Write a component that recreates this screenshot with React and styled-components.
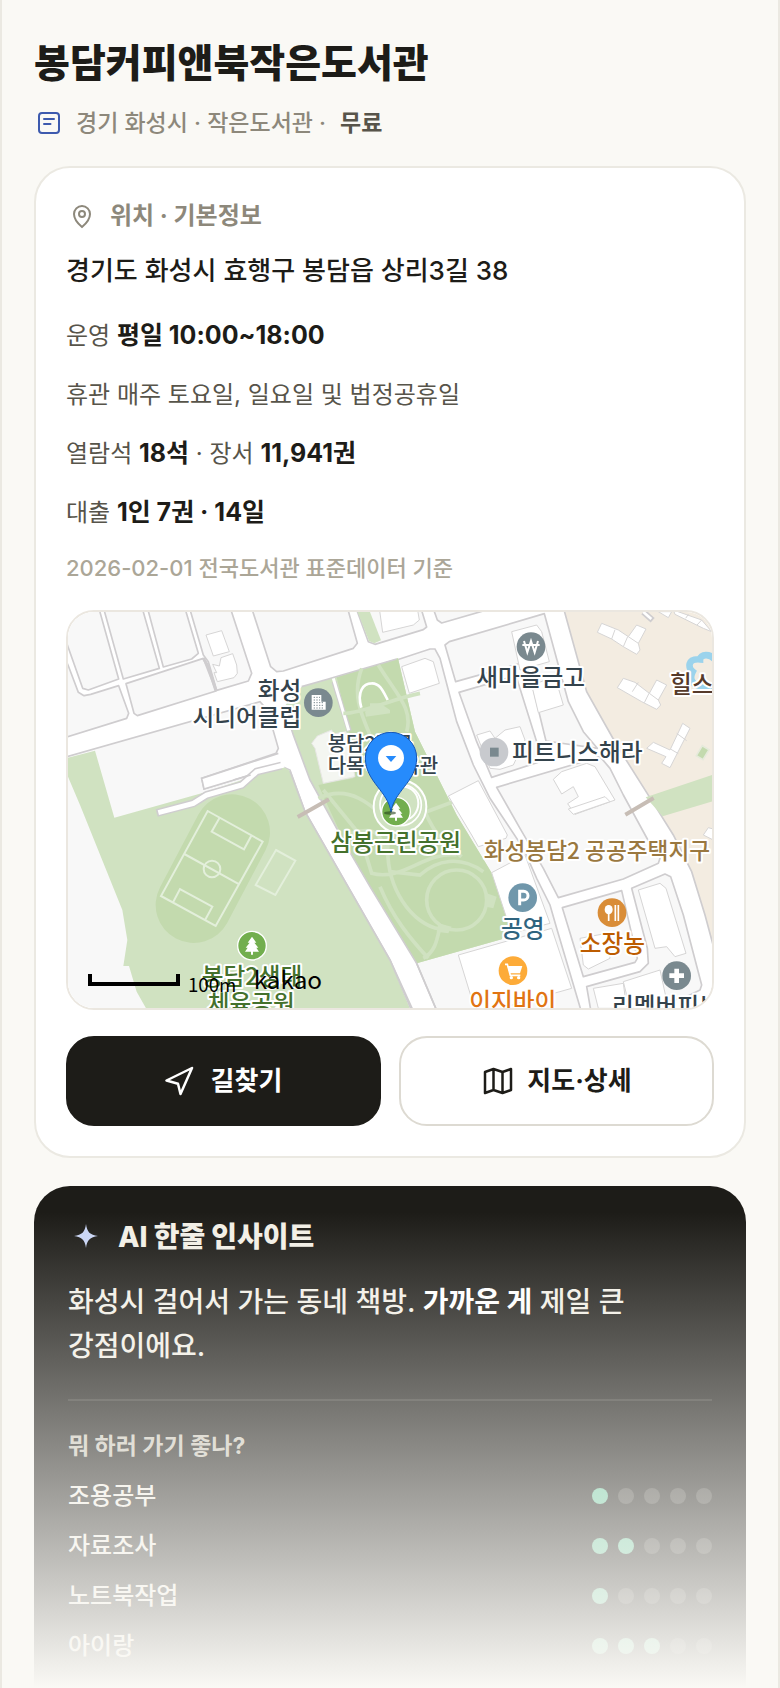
import React from "react";
import styled, { createGlobalStyle } from "styled-components";

const GlobalStyle = createGlobalStyle`
  * {
    box-sizing: border-box;
  }

  body {
    margin: 0;
    background: #faf9f5;
    color: #1d1c18;
    font-family: Inter, "Noto Sans CJK KR", sans-serif;
    font-weight: 500;
  }
`;

const Page = styled.main`
  position: relative;
  min-height: 100vh;
  padding: 38px 32px 0;
  border: solid #ebe9e2;
  border-width: 0 2px;
  overflow: hidden;
`;

const Title = styled.h1`
  margin: 0;
  font-size: 39px;
  font-weight: 800;
  line-height: 50px;
`;

const Subtitle = styled.p`
  display: flex;
  align-items: center;
  margin: 20px 0 28px;
  font-size: 23px;
  line-height: 30px;
  color: #8d887b;

  svg {
    width: 30px;
    height: 30px;
    margin-right: 12px;
  }

  strong {
    margin-left: 14px;
    font-weight: 700;
    color: #57544a;
  }
`;

const InfoCard = styled.section`
  padding: 31px 30px 30px;
  border: 2px solid #ebe9e2;
  border-radius: 36px;
  background: #fff;
`;

const CardTitle = styled.h2`
  display: flex;
  align-items: center;
  gap: 12px;
  margin: 0 0 18px;
  font-size: 24px;
  font-weight: 700;
  line-height: 34px;
  color: #8d887b;

  svg {
    width: 32px;
    height: 32px;
  }
`;

const Address = styled.p`
  margin: 0 0 27px;
  font-size: 26px;
  line-height: 40px;
`;

const Facts = styled.dl`
  display: flex;
  flex-direction: column;
  gap: 23px;
  margin: 0 0 22px;
`;

const Fact = styled.div`
  font-size: 24px;
  font-weight: 400;
  line-height: 36px;
  color: #57544a;

  dt,
  dd {
    display: inline;
    margin: 0;
  }

  strong {
    font-size: 25px;
    font-weight: 700;
    line-height: 1;
    color: #1d1c18;
  }
`;

const Source = styled.p`
  margin: 0 0 27px;
  font-size: 22px;
  line-height: 30px;
  color: #aba697;
`;

const MapFrame = styled.div`
  border: 2px solid #ebe7e0;
  border-radius: 28px;
  overflow: hidden;

  svg {
    display: block;
    width: 100%;
    height: auto;
  }
`;

const MapLabel = styled.text`
  font-family: "Noto Sans CJK KR", sans-serif;
  font-size: ${(props) => props.$size || 71}px;
  font-weight: 500;
  fill: ${(props) => props.$color || "#34434c"};
  stroke: #fff;
  stroke-width: 12px;
  stroke-linejoin: round;
  paint-order: stroke;
`;

const MapNote = styled.text`
  font-family: "Noto Sans CJK KR", sans-serif;
  font-size: ${(props) => props.$size}px;
  font-weight: 400;
  fill: #000;
`;

const Actions = styled.div`
  display: grid;
  grid-template-columns: 1fr 1fr;
  gap: 18px;
  margin-top: 26px;
`;

const ActionLink = styled.a`
  display: flex;
  align-items: center;
  justify-content: center;
  gap: 14px;
  height: 90px;
  border: 2px solid ${(props) => (props.$dark ? "#1d1c18" : "#dddad2")};
  border-radius: 28px;
  background: ${(props) => (props.$dark ? "#1d1c18" : "#fff")};
  color: ${(props) => (props.$dark ? "#fff" : "#1d1c18")};
  font-size: 26px;
  font-weight: 700;
  line-height: 34px;
  text-decoration: none;

  svg {
    width: 32px;
    height: 32px;
  }
`;

const InsightCard = styled.section`
  margin-top: 28px;
  padding: 34px 34px 25px;
  border-radius: 36px 36px 0 0;
  background: #1d1c18;
  color: #f2efe6;
`;

const InsightTitle = styled.h2`
  display: flex;
  align-items: center;
  gap: 14px;
  margin: 0 0 26px;
  font-size: 28px;
  font-weight: 800;
  line-height: 34px;

  svg {
    width: 36px;
    height: 32px;
  }
`;

const InsightText = styled.p`
  margin: 0 0 31px;
  font-size: 28px;
  line-height: 44px;
  word-break: keep-all;

  strong {
    font-weight: 700;
    color: #fff;
  }
`;

const Divider = styled.hr`
  height: 2px;
  margin: 0 0 28px;
  border: 0;
  background: #35342f;
`;

const ScoreTitle = styled.h3`
  margin: 0 0 16px;
  font-size: 23px;
  font-weight: 700;
  line-height: 34px;
  color: #c9c5b9;
`;

const ScoreList = styled.ul`
  display: flex;
  flex-direction: column;
  gap: 16px;
  margin: 0;
  padding: 0;
  list-style: none;
`;

const ScoreRow = styled.li`
  display: flex;
  align-items: center;
  justify-content: space-between;
  font-size: 24px;
  line-height: 34px;
`;

const Dots = styled.div`
  display: flex;
  gap: 10px;
`;

const Dot = styled.span`
  width: 16px;
  height: 16px;
  border-radius: 50%;
  background: ${(props) => (props.$on ? "#6fc9a2" : "#45443f")};
`;

const Fade = styled.div`
  position: absolute;
  right: 0;
  bottom: 0;
  left: 0;
  height: 476px;
  background: linear-gradient(rgba(250, 249, 245, 0), #faf9f5);
  pointer-events: none;
`;

const scores = [
  { name: "조용공부", value: 1 },
  { name: "자료조사", value: 2 },
  { name: "노트북작업", value: 1 },
  { name: "아이랑", value: 3 },
];

const blocks = [
  "0,0 114,0 176,222 85,255 68,250 24,125 0,60",
  "128,0 190,222 298,190 244,0",
  "260,0 310,186 395,162 415,145 372,0",
  "0,130 24,180 55,262 72,272 92,268 176,242 206,325 200,340 0,402",
  "198,236 430,160 468,258 232,332 222,325",
  "386,0 430,150 445,170 470,256 565,228 575,205 508,0",
  "572,0 632,185 650,200 670,198 880,130 892,115 860,0",
  "885,0 925,110 945,118 1090,74 1100,66 1080,0",
  "1116,0 1132,45 1145,54 1290,12 1290,0",
  "1155,120 1168,110 1453,26 1525,290 1570,380 1612,430 1458,408 1400,170 1187,230",
  "1197,262 1368,212 1430,410 1440,470 1295,517 1250,410",
  "1310,547 1620,455 1650,490 1690,570 1780,735 1800,760 1795,775 1690,822 1495,878 1450,790 1380,670",
  "1507,908 1685,857 1732,1060 1725,1072 1570,1115",
  "1715,850 1815,807 1832,815 1870,930 1925,1140 1920,1155 1885,1172 1600,1260 1580,1145 1740,1100 1765,1075 1762,1030",
];

const buildings = [
  "438,90 485,77 508,140 460,153",
  "458,178 478,183 483,158 518,146 530,180 532,205 522,218 472,230 462,203 470,203",
  "958,10 968,82 1060,60 1078,45 1072,10",
  "1025,185 1095,160 1120,170 1138,235 1048,265",
  "1355,80 1430,60 1445,80 1468,170 1380,195",
  "1415,240 1485,215 1510,300 1435,323",
  "1250,390 1290,378 1305,400 1335,375 1380,365 1395,405 1360,480 1320,493 1290,490",
  "1480,523 1505,500 1580,475 1605,485 1665,585 1545,628 1523,596 1555,575 1540,545 1505,567",
  "1165,573 1255,527 1342,690 1338,700 1255,725 1235,690",
  "1295,803 1395,750 1470,955 1355,985",
  "1195,1050 1475,970 1535,1150 1250,1230",
  "1525,612 1635,575 1650,590 1540,628",
  "1735,855 1800,835 1818,850 1878,1045 1845,1055 1820,1025 1785,1030",
  "1560,1000 1640,985 1650,1060 1585,1092 1570,1080",
  "1600,1150 1690,1135 1700,1210 1615,1210",
  "1690,1130 1800,1095 1825,1210 1710,1210",
];

const houses = [
  "1625,55 1675,75 1705,95 1730,60 1758,72 1735,115 1740,135 1730,148 1690,125 1655,102 1612,82",
  "1690,220 1725,232 1768,265 1790,225 1820,240 1795,285 1802,300 1790,313 1745,290 1672,248",
  "1868,355 1890,370 1830,488 1805,475 1818,455 1760,430 1780,412 1830,435",
  "1840,15 1925,45 1955,80 1930,70 1845,28",
  "1795,20 1835,20 1825,38",
  "1945,668 1960,672 1960,705 1930,690",
];

const FieldIcon = () => (
  <svg viewBox="0 0 30 30" fill="none" stroke="#3d5aae" strokeWidth="2" strokeLinecap="round" aria-hidden="true">
    <rect x="5" y="5" width="20" height="20" rx="3" />
    <path d="M10 11h10M10 16h6.500" />
  </svg>
);

const PinIcon = () => (
  <svg viewBox="0 0 32 32" fill="none" stroke="currentColor" strokeWidth="2" aria-hidden="true">
    <path d="M16 27c-3.400-2.800-8-7.600-8-13a8 8 0 0 1 16 0c0 5.400-4.600 10.200-8 13z" />
    <circle cx="16" cy="14" r="3" />
  </svg>
);

const NavigationIcon = () => (
  <svg viewBox="0 0 32 32" fill="none" stroke="currentColor" strokeWidth="2.500" strokeLinejoin="round" aria-hidden="true">
    <path d="M27 3 1.500 15.500l11.500 3.200L15.500 29z" />
  </svg>
);

const MapIcon = () => (
  <svg viewBox="0 0 32 32" fill="none" stroke="currentColor" strokeWidth="2.500" strokeLinejoin="round" aria-hidden="true">
    <path d="m4 7 8.500-3 9 3L30 4v21l-8.500 3-9-3L4 28zM12.500 4v21M21.500 7v21" />
  </svg>
);

const SparkIcon = () => (
  <svg viewBox="0 0 36 32" fill="#c9d5f5" aria-hidden="true">
    <path d="M18 3c1 8 4 11 12 12-8 1-11 4-12 12-1-8-4-11-12-12 8-1 11-4 12-12z" />
  </svg>
);

const TreeMark = ({ x, y }) => (
  <g transform={`translate(${x} ${y})`}>
    <circle r="43" fill="#72ae4e" stroke="#fff" strokeWidth="4" />
    <path d="M0-27-13-9h6l-12 15h6l-8 12H-3V27H3V18H21L13 6h6L7-9h6z" fill="#fff" />
  </g>
);

const LibraryMap = () => (
  <svg viewBox="24 21 1932 1188" role="img" aria-label="지도">
    <rect width="1980" height="1240" fill="#fff" />

    {/* ground to the west and the sports park */}
    <path d="M0 461 600 290 622 315 655 430 648 445 425 520 432 552 660 482 690 495 735 620 990 1065 1070 1240H0z" fill="#f8f8f8" stroke="#cfcdcf" strokeWidth="5" />
    <path d="M24 458 105 437 163 638 430 563 670 485 690 498 735 620 990 1065 1062 1240H275L230 1160 207 1083H190L202 1005 187 915 60 600 24 515z" fill="#d0e2c1" />
    <path d="M516 682 401 900" stroke="#c3daae" strokeWidth="228" strokeLinecap="round" />
    <g fill="none" stroke="#e3efdb" strokeWidth="6">
      <path d="M443 618 608 710 467 963 303 873zM373 747l165 91M478 640l-23 40 97 53 22-41M340 890l20-38 97 53-23 42M648 735l58 32-60 103-59-30z" />
      <circle cx="456" cy="792" r="25" />
    </g>
    <path d="M290 624 400 595 440 570 545 540 590 500 664 482" fill="none" stroke="#cfcdcf" strokeWidth="24" />
    <path d="M295 623 400 595 440 570 545 540 590 500 672 480" fill="none" stroke="#fff" strokeWidth="15" />
    <path d="M425 520 520 492V524L432 552z" fill="#fff" />
    <path d="M655 445 425 520 432 552 572 510" fill="none" stroke="#cfcdcf" strokeWidth="5" />
    <path d="M690 498 735 620 990 1065 1065 1240" fill="none" stroke="#cfcdcf" strokeWidth="5" />

    {/* central park with its eastern strip */}
    <path d="M1010 165 1110 132 1125 132 1140 160 1190 350 1240 480 1290 580 1390 730 1430 820 1470 900 1490 970 1570 1240H1140L1070 1075z" fill="#f8f8f8" stroke="#cfcdcf" strokeWidth="5" />
    <path d="M725 245 805 222 830 216 1014 160 1065 380 1190 630 1335 870 1360 930 1325 1003 1070 1075 930 845 860 725 750 525 700 390 672 305z" fill="#d0e2c1" />
    <path d="M830 216 1014 160 1065 380 1190 630 1335 870 1360 930 1325 1003 1070 1075 930 845 860 725 775 540 880 520 868 380z" fill="#c3daae" />
    <path d="M725 245 805 222 825 216 1010 162M672 305 700 390 750 525 860 725 930 845 1070 1075 1140 1240" fill="none" stroke="#cfcdcf" strokeWidth="5" />
    <path d="M822 230 868 378" stroke="#cfcdcf" strokeWidth="15" />
    <path d="M820 220 866 376" stroke="#fff" strokeWidth="9" />
    <path d="M755 415 772 393 815 375 820 387 858 380 885 515 790 535 765 430z" fill="#f4f6f1" stroke="#e7e6e4" strokeWidth="3" />
    <g fill="none" stroke="#d0e2c1" strokeWidth="11">
      <path d="M905 190C875 270 905 330 930 390M850 325C910 325 1000 280 1080 265M955 180C1010 270 1060 310 1040 380M790 555 900 690 935 805C1030 830 1090 740 1190 750M775 580C860 540 930 580 1030 700L1100 620 1180 590M985 700C970 850 1060 960 1140 972M1095 620C1130 700 1160 720 1205 755M860 690C920 670 960 660 980 750M960 845C1000 940 1050 1000 1105 1060M1140 965C1130 1010 1125 1040 1090 1060M990 800 1080 810C1130 765 1200 750 1270 800" />
      <circle cx="1190" cy="885" r="90" />
    </g>
    <path d="M915 320 930 310V295H960L990 315V325L918 335zM1280 865 1310 875 1300 910 1278 905zM1135 955 1175 965 1165 985 1130 980z" fill="#d0e2c1" />
    <ellipse cx="1020" cy="605" rx="79" ry="80" fill="#d0e2c1" stroke="#fff" strokeWidth="6" />
    <ellipse cx="1030" cy="595" rx="45" ry="50" fill="none" stroke="#fff" strokeWidth="6" />
    <ellipse cx="1022" cy="600" rx="62" ry="62" fill="none" stroke="#fff" strokeWidth="5" />
    <path d="M904 308C890 260 910 235 935 235 960 234 970 260 983 285" fill="none" stroke="#fff" strokeWidth="8" />

    {/* apartment district */}
    <path d="M1508 0 1580 260 1670 420 1790 610 1840 690 1895 800 1935 930 1970 1060V0z" fill="#f3ece1" stroke="#cfcdcf" strokeWidth="5" />
    <path d="M1757 577 1980 502V582L1808 634z" fill="#d0e2c1" />
    <path d="m1927 422 20 12-18 30-20-12z" fill="#c3daae" stroke="#e5eadb" strokeWidth="5" />
    <path d="M1970 170C1950 140 1920 150 1920 163 1880 160 1885 190 1898 200 1885 225 1900 240 1925 245 1950 250 1960 240 1970 240" fill="none" stroke="#9bd3ec" strokeWidth="20" />
    <path d="m1750 21 28 25" stroke="#cfcdcf" strokeWidth="18" />
    <path d="m1750 21 24 21" stroke="#fff" strokeWidth="8" />

    <g fill="#f8f8f8" stroke="#cfcdcf" strokeWidth="5" strokeLinejoin="round">
      {blocks.map((points) => (
        <polygon key={points} points={points} />
      ))}
    </g>
    <path d="M893 21H930L963 106 943 115 927 108z" fill="#d0e2c1" />
    <path d="M430 160 445 185 468 258" fill="none" stroke="#cfcdcf" strokeWidth="9" />
    <g fill="#fff" stroke="#d6d5d5" strokeWidth="3">
      {buildings.map((points) => (
        <polygon key={points} points={points} />
      ))}
      {houses.map((points) => (
        <polygon key={points} points={points} />
      ))}
      <path d="m1665 74-10 28M1703 95l-13 30M1705 95l30 20M1735 232l-18 28M1767 265l-14 28M1768 265l27 20M1850 385l30 22M1833 433l22 13M1885 28l-8 12M1925 45l-14 15" />
    </g>
    <path d="M713 636 807 583M1696 629 1781 579" stroke="#c7bdb5" strokeWidth="12" />

    {/* places */}
    <circle cx="775" cy="293" r="43" fill="#7a898f" />
    <path d="M755 270h29v20h13v24h-42z" fill="#fff" />
    <path d="M761 277h19M761 285h19M761 293h32M761 301h32M761 309h32" stroke="#7a898f" strokeWidth="3" strokeDasharray="4 4" />
    <circle cx="1413" cy="125" r="43" fill="#7a898f" />
    <path d="m1392 108 10 34 11-34 11 34 10-34M1387 120h52" fill="none" stroke="#fff" strokeWidth="6" />
    <circle cx="1302" cy="441" r="43" fill="#c8cace" />
    <rect x="1290" y="428" width="26" height="27" fill="#7a898f" />
    <MapLabel x="724" y="283" textAnchor="end">화성</MapLabel>
    <MapLabel x="724" y="362" textAnchor="end">시니어클럽</MapLabel>
    <MapLabel x="803" y="439" $size={60}>봉담2지구</MapLabel>
    <MapLabel x="803" y="504" $size={60}>다목적체육관</MapLabel>
    <MapLabel x="1412" y="244" textAnchor="middle">새마을금고</MapLabel>
    <MapLabel x="1356" y="467">피트니스해라</MapLabel>
    <MapLabel x="1830" y="263" $color="#563a2a">힐스</MapLabel>
    <MapLabel x="1271" y="761" $size={68} $color="#9a7840">화성봉담2 공공주택지구</MapLabel>

    <circle cx="1388" cy="878" r="43" fill="#7097ab" />
    <path d="M1379 901v-42h12a13 13 0 0 1 0 26h-12" fill="none" stroke="#fff" strokeWidth="9" />
    <MapLabel x="1388" y="997" textAnchor="middle" $color="#2f647f">공영</MapLabel>
    <circle cx="1656" cy="923" r="43" fill="#d98d38" />
    <ellipse cx="1646" cy="914" rx="12" ry="14" fill="#fff" />
    <path d="M1646 920v28M1666 900v48M1675 900v48" stroke="#fff" strokeWidth="5" />
    <MapLabel x="1657" y="1042" textAnchor="middle" $color="#bd5c00">소장농</MapLabel>
    <circle cx="1359" cy="1097" r="43" fill="#fdab38" />
    <path d="M1342 1083h45l-7 22h-31z" fill="#fff" />
    <path d="M1335 1078h7l9 33h30" fill="none" stroke="#fff" strokeWidth="5" />
    <circle cx="1354" cy="1118" r="5" fill="#fff" />
    <circle cx="1376" cy="1118" r="5" fill="#fff" />
    <MapLabel x="1358" y="1215" textAnchor="middle" $color="#e17412">이지바이</MapLabel>
    <circle cx="1850" cy="1112" r="43" fill="#7a898f" />
    <path d="M1850 1091v43M1828 1112h44" stroke="#fff" strokeWidth="14" />
    <MapLabel x="1656" y="1231">리멤버피부</MapLabel>

    <TreeMark x={576} y={1022} />
    <MapLabel x="576" y="1141" textAnchor="middle" $color="#44712c">봉담2생태</MapLabel>
    <MapLabel x="574" y="1220" textAnchor="middle" $color="#44712c">체육공원</MapLabel>
    <TreeMark x={1008} y={620} />
    <MapLabel x="1007" y="738" textAnchor="middle" $color="#44712c">삼봉근린공원</MapLabel>

    <path d="M993 622C986 560 916 530 916 459a77 77 0 0 1 154 0C1070 530 1000 560 993 622z" fill="#268bfc" stroke="#1456b8" strokeWidth="3" />
    <ellipse cx="990" cy="624" rx="18" ry="5" fill="#27431b" opacity="0.6" />
    <circle cx="993" cy="459" r="39" fill="#fff" />
    <path d="M977 453h32l-16 18z" fill="#268bfc" />

    <path d="M90 1107v30h264v-30" fill="none" stroke="#000" strokeWidth="12" />
    <MapNote x="384" y="1161" $size={56}>100m</MapNote>
    <MapNote x="581" y="1153" $size={73}>kakao</MapNote>
  </svg>
);

const App = () => {
  return (
    <>
      <GlobalStyle />
      <Page>
        <Title>봉담커피앤북작은도서관</Title>
        <Subtitle>
          <FieldIcon />
          경기 화성시 · 작은도서관 ·<strong>무료</strong>
        </Subtitle>

        <InfoCard>
          <CardTitle>
            <PinIcon />
            위치 · 기본정보
          </CardTitle>
          <Address>경기도 화성시 효행구 봉담읍 상리3길 38</Address>
          <Facts>
            <Fact>
              <dt>운영</dt> <dd><strong>평일 10:00~18:00</strong></dd>
            </Fact>
            <Fact>
              <dt>휴관</dt> <dd>매주 토요일, 일요일 및 법정공휴일</dd>
            </Fact>
            <Fact>
              <dt>열람석</dt> <dd><strong>18석</strong> · 장서 <strong>11,941권</strong></dd>
            </Fact>
            <Fact>
              <dt>대출</dt> <dd><strong>1인 7권 · 14일</strong></dd>
            </Fact>
          </Facts>
          <Source>2026-02-01 전국도서관 표준데이터 기준</Source>
          <MapFrame>
            <LibraryMap />
          </MapFrame>
          <Actions>
            <ActionLink href="#directions" $dark>
              <NavigationIcon />
              길찾기
            </ActionLink>
            <ActionLink href="#map">
              <MapIcon />
              지도·상세
            </ActionLink>
          </Actions>
        </InfoCard>

        <InsightCard>
          <InsightTitle>
            <SparkIcon />
            AI 한줄 인사이트
          </InsightTitle>
          <InsightText>
            화성시 걸어서 가는 동네 책방. <strong>가까운 게</strong> 제일 큰 강점이에요.
          </InsightText>
          <Divider />
          <ScoreTitle>뭐 하러 가기 좋나?</ScoreTitle>
          <ScoreList>
            {scores.map((score) => (
              <ScoreRow key={score.name}>
                {score.name}
                <Dots>
                  {[1, 2, 3, 4, 5].map((n) => (
                    <Dot key={n} $on={n <= score.value} />
                  ))}
                </Dots>
              </ScoreRow>
            ))}
          </ScoreList>
        </InsightCard>
        <Fade />
      </Page>
    </>
  );
};

export default App;
